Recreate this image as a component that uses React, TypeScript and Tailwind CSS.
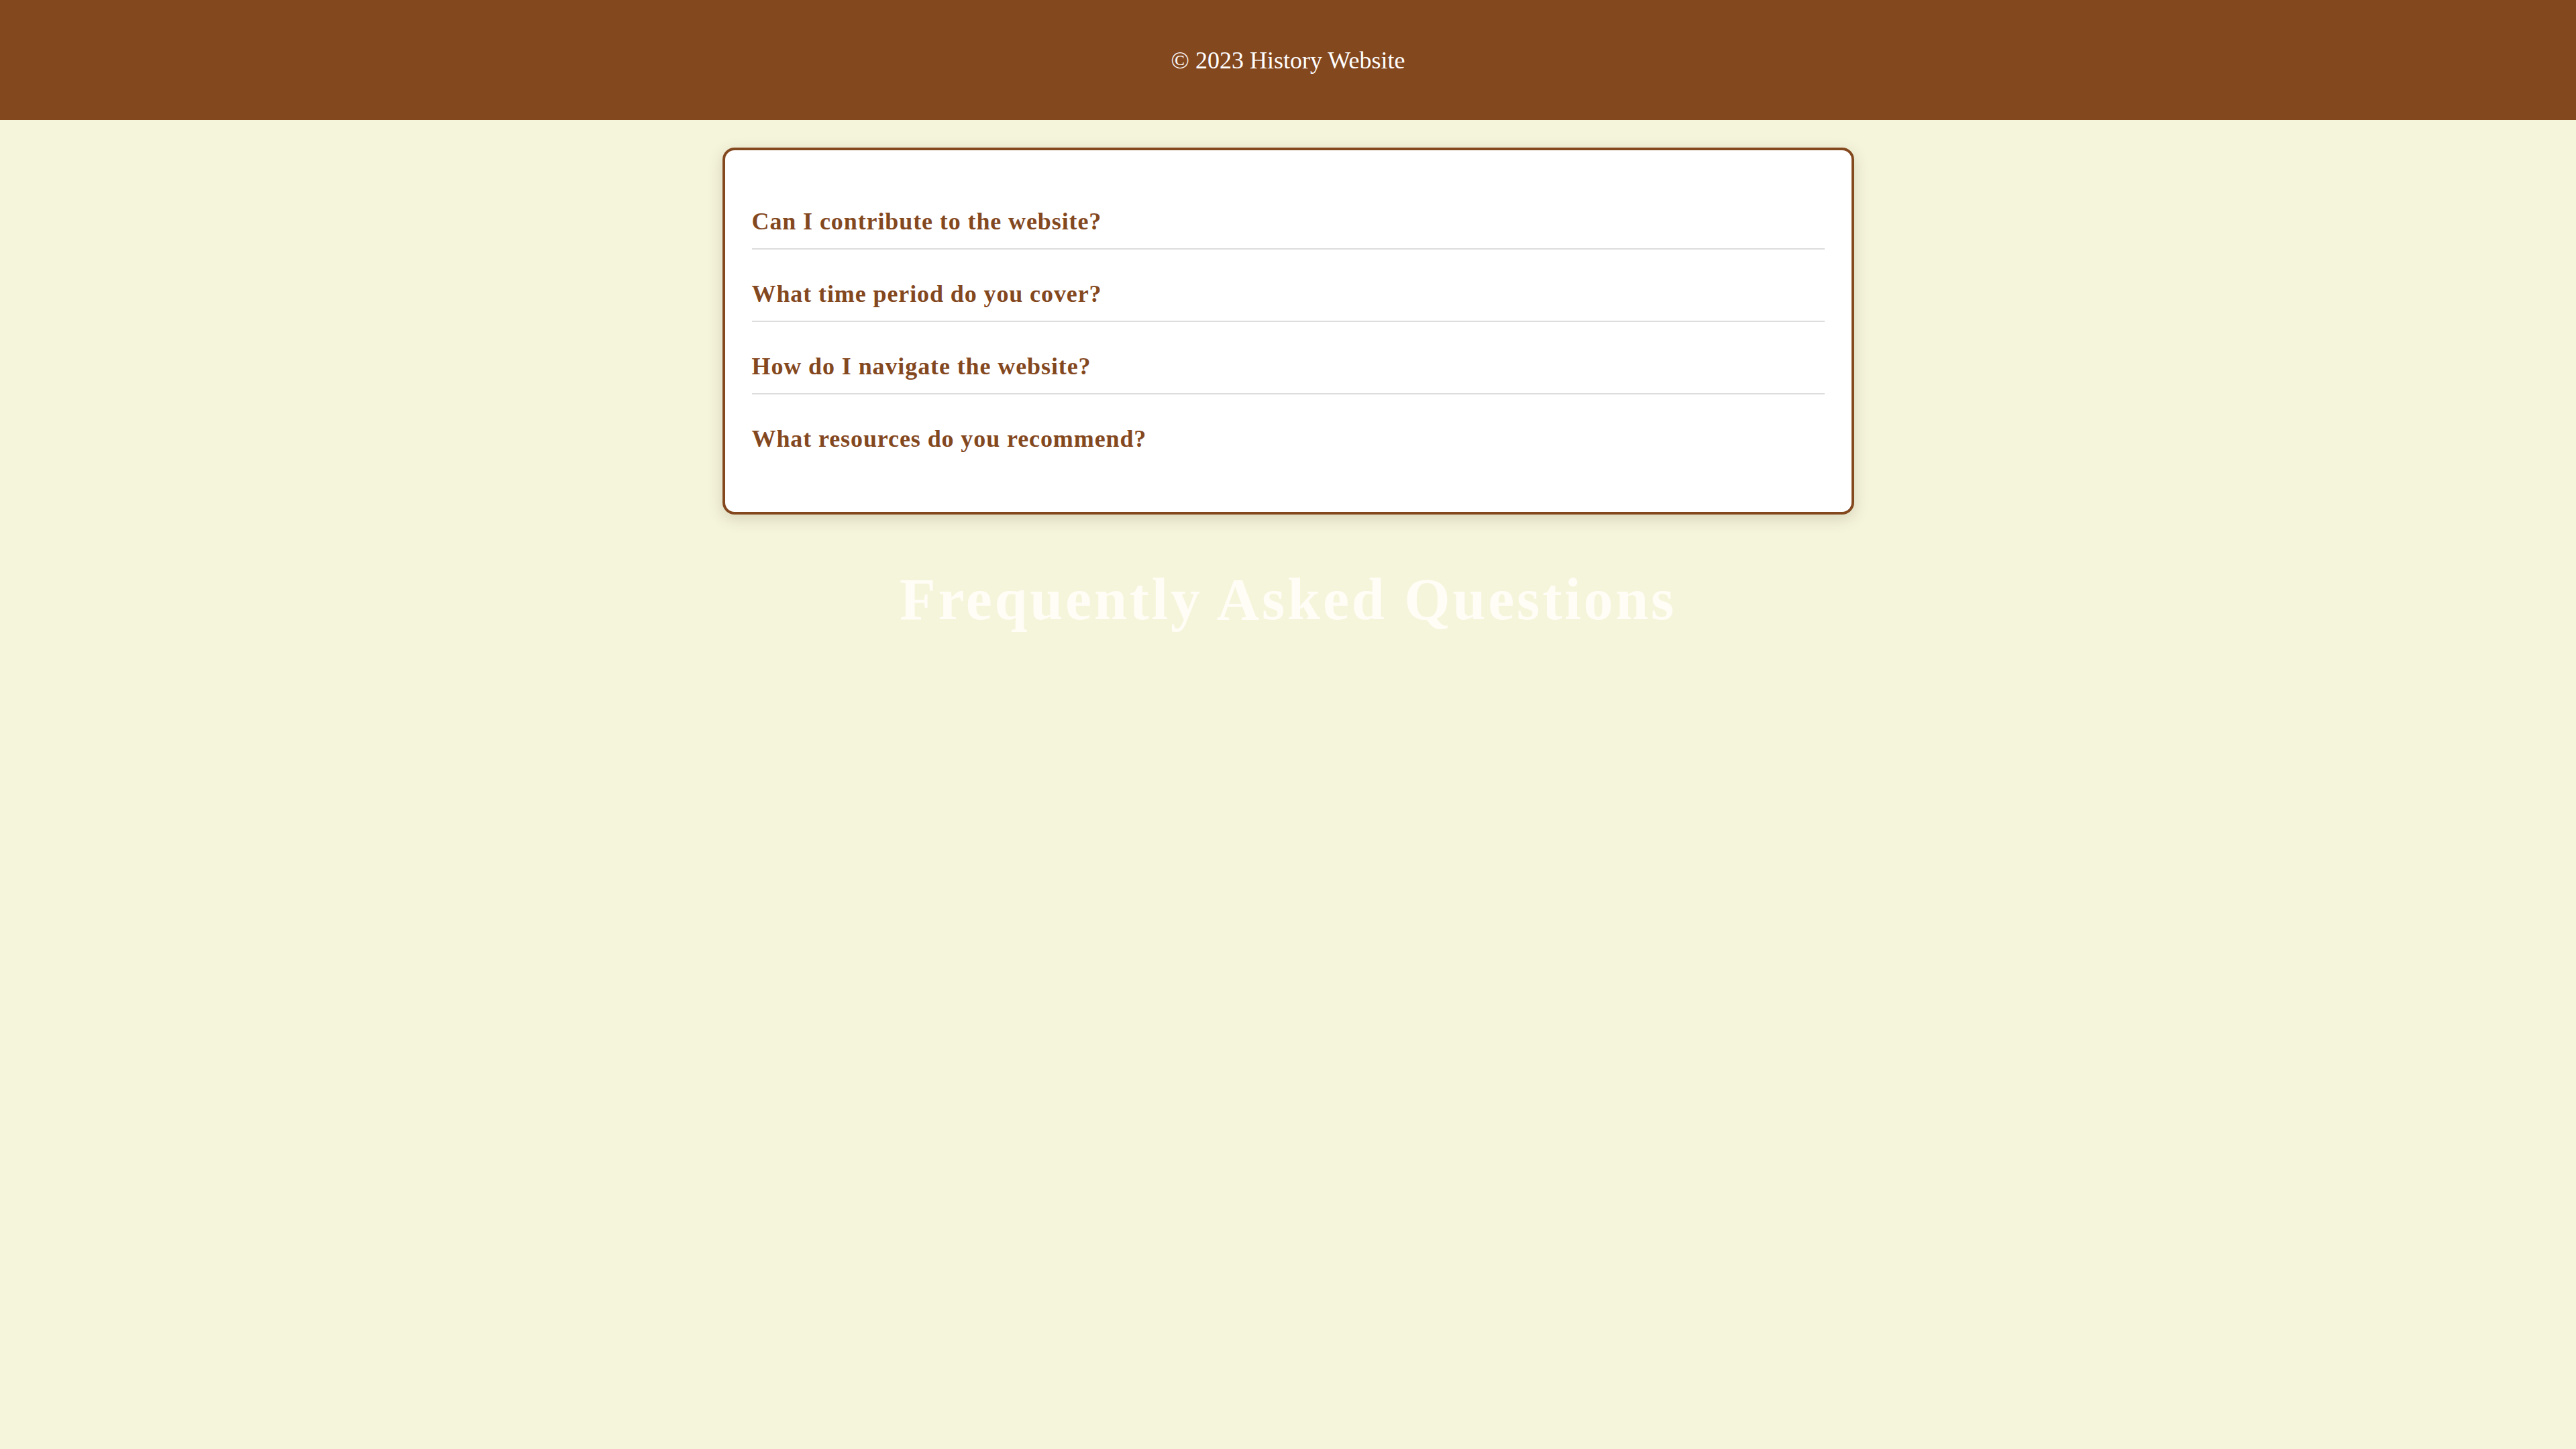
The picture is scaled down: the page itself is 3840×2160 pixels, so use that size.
const questions = [
  'Can I contribute to the website?',
  'What time period do you cover?',
  'How do I navigate the website?',
  'What resources do you recommend?',
];

export default function App() {
  return (
    <div className="min-h-screen bg-[#F5F5DC] font-['Liberation_Serif',serif]">
      <footer className="flex h-[179px] items-center justify-center bg-[#84481F]">
        <p className="text-[36px] leading-none text-white">© 2023 History Website</p>
      </footer>

      <main className="mx-auto mt-[41px] w-[1687px]">
        <section className="rounded-[18px] border-4 border-[#84481F] bg-white px-[40px] pt-[40px] pb-[69px] shadow-[0_6px_22px_rgba(80,60,20,0.18)]">
          {questions.map((q, i) => (
            <div
              key={q}
              className={
                i < questions.length - 1
                  ? 'border-b-2 border-[#dddddd] pt-[47px] pb-[21px]'
                  : 'pt-[47px] pb-[21px]'
              }
            >
              <h3 className="text-[36px] leading-[38px] tracking-[0.9px] font-bold text-[#84481F]">{q}</h3>
            </div>
          ))}
        </section>

        <h1 className="mt-[80px] text-center text-[88px] leading-[93px] tracking-[3.8px] font-bold text-[#FFFDF5]">
          Frequently Asked Questions
        </h1>
      </main>
    </div>
  );
}
